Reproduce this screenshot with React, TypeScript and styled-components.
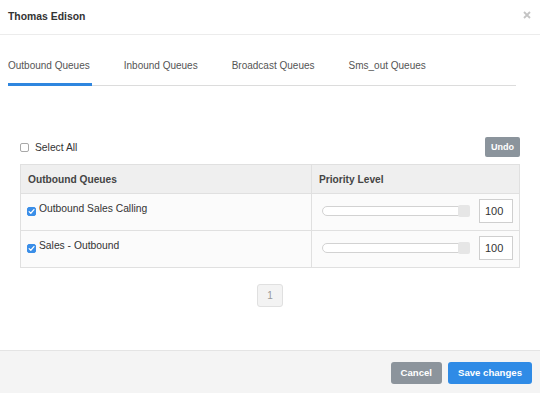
import React, { useState } from 'react';
import styled, { createGlobalStyle } from 'styled-components';

const GlobalStyle = createGlobalStyle`
    * {
        box-sizing: border-box;
    }
    body {
        margin: 0;
        background: #fff;
        font-family: "Liberation Sans", Arial, sans-serif;
        color: #333;
    }
`;

const tabs = ['Outbound Queues', 'Inbound Queues', 'Broadcast Queues', 'Sms_out Queues'];

const queues = [
    { name: 'Outbound Sales Calling', level: 100 },
    { name: 'Sales - Outbound', level: 100 },
];

const Check = ({ checked }: { checked: boolean }) => (
    <CheckBox checked={checked}>
        {checked && (
            <svg width="7" height="7" viewBox="0 0 8 8">
                <path d="M1.3 4.2 L3.2 6 L6.8 1.8" fill="none" stroke="#fff" strokeWidth="1.4" strokeLinecap="round" strokeLinejoin="round" />
            </svg>
        )}
    </CheckBox>
);

const App = () => {
    const [active, setActive] = useState(0);
    return (
        <>
            <GlobalStyle />
            <Modal>
                <Header>
                    <Title>Thomas Edison</Title>
                    <Close aria-label="Close">
                        <svg width="8" height="8" viewBox="0 0 8 8">
                            <path d="M1 1 L7 7 M7 1 L1 7" stroke="#c4c4c4" strokeWidth="1.8" />
                        </svg>
                    </Close>
                </Header>
                <Body>
                    <TabBar>
                        {tabs.map((t, i) => (
                            <Tab key={t} active={i === active} onClick={() => setActive(i)}>
                                {t}
                            </Tab>
                        ))}
                    </TabBar>
                    <Content>
                        <Toolbar>
                            <SelectAll>
                                <Check checked={false} />
                                Select All
                            </SelectAll>
                            <UndoButton>Undo</UndoButton>
                        </Toolbar>
                        <Table>
                            <HeadRow>
                                <HeadCell>Outbound Queues</HeadCell>
                                <HeadCell>Priority Level</HeadCell>
                            </HeadRow>
                            {queues.map((q) => (
                                <Row key={q.name}>
                                    <NameCell>
                                        <Check checked />
                                        <span>{q.name}</span>
                                    </NameCell>
                                    <LevelCell>
                                        <Slider>
                                            <Track />
                                            <Thumb />
                                        </Slider>
                                        <LevelInput>{q.level}</LevelInput>
                                    </LevelCell>
                                </Row>
                            ))}
                        </Table>
                        <Pager>
                            <PageButton>1</PageButton>
                        </Pager>
                    </Content>
                </Body>
                <Footer>
                    <FooterButton variant="grey">Cancel</FooterButton>
                    <FooterButton variant="blue">Save changes</FooterButton>
                </Footer>
            </Modal>
        </>
    );
};

export default App;

const Modal = styled.div`
    width: 540px;
    height: 393px;
    display: flex;
    flex-direction: column;
    background: #fff;
    font-size: 10px;
`;

const Header = styled.div`
    height: 35px;
    padding: 0 9px 2px 8px;
    display: flex;
    align-items: center;
    justify-content: space-between;
    border-bottom: 1px solid #ececec;
`;

const Title = styled.div`
    font-weight: bold;
    font-size: 10.4px;
    color: #333;
`;

const Close = styled.div`
    display: flex;
    margin-top: -3px;
`;

const Body = styled.div`
    flex: 1;
`;

const TabBar = styled.div`
    margin: 0 24px 0 8px;
    display: flex;
    gap: 32px;
    border-bottom: 1px solid #dcdcdc;
`;

const Tab = styled.div<{ active: boolean }>`
    padding: 23px 2px 9px 0;
    line-height: 16px;
    font-size: 10px;
    color: #555;
    cursor: pointer;
    margin-bottom: -1px;
    border-bottom: 3px solid ${(p) => (p.active ? '#2f86df' : 'transparent')};
`;

const Content = styled.div`
    padding: 0 20px;
`;

const Toolbar = styled.div`
    margin-top: 51px;
    height: 20px;
    display: flex;
    align-items: center;
    justify-content: space-between;
`;

const SelectAll = styled.label`
    display: flex;
    align-items: center;
    gap: 6px;
    font-size: 10.3px;
    color: #333;
`;

const CheckBox = styled.span<{ checked: boolean }>`
    width: 9px;
    height: 9px;
    flex: none;
    border-radius: 2px;
    display: inline-flex;
    align-items: center;
    justify-content: center;
    background: ${(p) => (p.checked ? '#3a8ee8' : '#fff')};
    border: 1px solid ${(p) => (p.checked ? '#3a8ee8' : '#a8a8a8')};
`;

const UndoButton = styled.button`
    width: 35px;
    height: 20px;
    border: none;
    border-radius: 2px;
    background: #8b949c;
    color: #fff;
    font-family: inherit;
    font-weight: bold;
    font-size: 9px;
    padding: 0;
`;

const Table = styled.div`
    margin-top: 7px;
    border: 1px solid #e0e0e0;
    border-bottom: none;
`;

const HeadRow = styled.div`
    display: grid;
    grid-template-columns: 290px 1fr;
    height: 29px;
    background: #efefef;
    border-bottom: 1px solid #e0e0e0;
`;

const HeadCell = styled.div`
    display: flex;
    align-items: center;
    padding-left: 7px;
    font-weight: bold;
    font-size: 10.2px;
    color: #444;
    & + & {
        border-left: 1px solid #e0e0e0;
    }
`;

const Row = styled.div`
    display: grid;
    grid-template-columns: 290px 1fr;
    height: 37px;
    background: #fbfbfb;
    border-bottom: 1px solid #e0e0e0;
`;

const NameCell = styled.div`
    display: flex;
    align-items: flex-start;
    gap: 3px;
    padding: 7px 6px 0;
    font-size: 10.3px;
    line-height: 15px;
    color: #333;
    & > span:first-child {
        margin-top: 6px;
    }
`;

const LevelCell = styled.div`
    display: flex;
    align-items: center;
    padding: 0 7px 2px 10px;
    border-left: 1px solid #e0e0e0;
`;

const Slider = styled.div`
    position: relative;
    width: 148px;
    height: 12px;
    display: flex;
    align-items: center;
`;

const Track = styled.div`
    width: 100%;
    height: 10px;
    background: #fff;
    border: 1px solid #d2d2d2;
    border-radius: 5px;
`;

const Thumb = styled.div`
    position: absolute;
    right: 0;
    top: 0;
    width: 12px;
    height: 12px;
    border-radius: 2px;
    background: #e6e6e6;
`;

const LevelInput = styled.div`
    margin-left: 9px;
    width: 34px;
    height: 24px;
    border: 1px solid #cfcfcf;
    background: #fff;
    display: flex;
    align-items: center;
    padding-left: 5px;
    font-size: 11px;
    color: #333;
`;

const Pager = styled.div`
    display: flex;
    justify-content: center;
    margin-top: 16px;
`;

const PageButton = styled.div`
    width: 26px;
    height: 23px;
    border: 1px solid #e0e0e0;
    border-radius: 3px;
    background: #f3f3f3;
    color: #999;
    font-size: 10px;
    display: flex;
    align-items: center;
    justify-content: center;
`;

const Footer = styled.div`
    height: 43px;
    background: #f4f4f4;
    border-top: 1px solid #e4e4e4;
    display: flex;
    align-items: center;
    justify-content: flex-end;
    gap: 6px;
    padding: 1px 8px 0 0;
`;

const FooterButton = styled.button<{ variant: 'grey' | 'blue' }>`
    height: 22px;
    padding: 0 10px;
    border: none;
    border-radius: 3px;
    background: ${(p) => (p.variant === 'blue' ? '#2f8be6' : '#8c949c')};
    color: #fff;
    font-family: inherit;
    font-weight: bold;
    font-size: 9.6px;
`;
